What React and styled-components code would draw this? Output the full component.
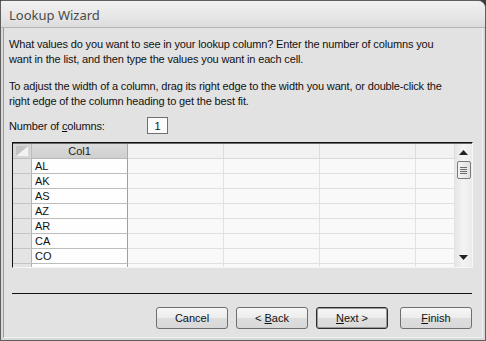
import React from "react";
import styled, { createGlobalStyle } from "styled-components";

const Global = createGlobalStyle`
  html, body { margin: 0; padding: 0; background: #3a3a3a; }
  body { width: 486px; height: 341px; overflow: hidden; }
  * { box-sizing: border-box; }
`;

const Window = styled.div`
  width: 486px;
  height: 341px;
  border: 1px solid #5e5e5e;
  border-top-right-radius: 8px;
  border-top-left-radius: 2px;
  background: #d9d9d9;
  display: flex;
  flex-direction: column;
  overflow: hidden;
  font-family: "Liberation Sans", Arial, sans-serif;
`;

const TitleBar = styled.div`
  height: 27px;
  flex: none;
  display: flex;
  align-items: center;
  padding: 0 0 0 8px;
  background: linear-gradient(#f1f1f1, #e6e6e6 60%, #dcdcdc);
  border-bottom: 1px solid #b4b4b4;
`;

const Title = styled.span`
  font-family: "Noto Sans", "Liberation Sans", sans-serif;
  font-size: 13px;
  color: #4a4a4a;
  margin-top: 1px;
`;

const Body = styled.div`
  flex: 1;
  padding: 0 2px 2px 2px;
  display: flex;
`;

const Panel = styled.div`
  flex: 1;
  background: #e2e2e2;
  border-left: 1px solid #9c9c9c;
  border-right: 1px solid #f2f2f2;
  border-bottom: 1px solid #f2f2f2;
  padding-top: 9px;
  display: flex;
  flex-direction: column;
  color: #111;
  font-size: 11px;
`;

const Para = styled.p`
  margin: 0 0 ${(p) => p.$gap}px 0;
  padding: 0 5px;
  line-height: 15px;
  white-space: nowrap;
  letter-spacing: -0.15px;
`;

const FieldRow = styled.div`
  display: flex;
  align-items: center;
  padding: 0 5px;
  height: 17px;
`;

const Label = styled.span`
  width: 138px;
  letter-spacing: -0.15px;
`;

const NumBox = styled.div`
  width: 21px;
  height: 17px;
  border: 1px solid #6f6f6f;
  background: #fbfbfb;
  display: flex;
  align-items: center;
  justify-content: center;
  font-size: 11px;
`;

const Grid = styled.div`
  margin: 8px 9px 0 8px;
  height: 126px;
  display: flex;
  border-style: solid;
  border-width: 1px;
  border-color: #111 #f6f6f6 #f6f6f6 #111;
  overflow: hidden;
`;

const Sheet = styled.div`
  flex: 1;
  display: grid;
  grid-template-columns: 19px 96px 96px 96px 96px 1fr;
  grid-auto-rows: 15px;
  align-content: start;
  background: #f8f8f8;
  overflow: hidden;
  border-top: 1px solid #6a6a6a;
`;

const Corner = styled.div`
  background: #d6d6d6;
  border-right: 1px solid #bdbdbd;
  border-bottom: 1px solid #bdbdbd;
  position: relative;
  svg { position: absolute; inset: 0; }
`;

const HeadCell = styled.div`
  background: ${(p) =>
    p.$active ? "linear-gradient(#dcdcdc, #cfcfcf)" : "#f2f2f2"};
  border-right: 1px solid ${(p) => (p.$active ? "#a9a9a9" : "#dcdcdc")};
  border-bottom: 1px solid ${(p) => (p.$active ? "#b9b9b9" : "#d9d9d9")};
  color: #222;
  text-align: center;
  line-height: 14px;
  font-size: 11px;
`;

const Selector = styled.div`
  background: #e4e4e4;
  border-right: 1px solid #b3b3b3;
  border-bottom: 1px solid #c4c4c4;
`;

const Cell = styled.div`
  background: ${(p) => (p.$active ? "#fefefe" : "#f9f9f9")};
  border-right: 1px solid ${(p) => (p.$active ? "#9f9f9f" : "#e2e2e2")};
  border-bottom: 1px solid ${(p) => (p.$active ? "#bcbcbc" : "#e0e0e0")};
  padding-left: 3px;
  line-height: 14px;
  font-size: 11px;
  color: #111;
`;

const ScrollBar = styled.div`
  width: 17px;
  flex: none;
  background: linear-gradient(90deg, #e6e6e6, #f3f3f3 50%, #ebebeb);
  border-top: 1px solid #6a6a6a;
  display: flex;
  flex-direction: column;
  align-items: center;
  padding-top: 6px;
`;

const Arrow = styled.svg`
  width: 9px;
  height: 5px;
  flex: none;
`;

const Thumb = styled.div`
  margin-top: 6px;
  width: 14px;
  height: 18px;
  border: 1px solid #7a7a7a;
  border-radius: 2px;
  background: linear-gradient(90deg, #f4f4f4, #e0e0e0);
  display: flex;
  flex-direction: column;
  align-items: center;
  justify-content: center;
  gap: 1px;
`;

const Grip = styled.div`
  width: 7px;
  height: 1px;
  background: #6c6c6c;
`;

const Spacer = styled.div`
  flex: 1;
`;

const Divider = styled.div`
  margin: 25px 10px 0 8px;
  height: 1px;
  background: #111;
`;

const ButtonRow = styled.div`
  display: flex;
  justify-content: flex-end;
  margin: 13px 10px 0 0;
`;

const Button = styled.div`
  width: 72px;
  height: 22px;
  margin-left: ${(p) => p.$gap}px;
  border: 1px solid ${(p) => (p.$default ? "#2c2c2c" : "#6f6f6f")};
  box-shadow: ${(p) => (p.$default ? "inset 0 0 0 1px #9a9a9a" : "none")};
  border-radius: 3px;
  background: linear-gradient(#f6f6f6, #ececec 50%, #dedede 51%, #d8d8d8);
  display: flex;
  align-items: center;
  justify-content: center;
  font-size: 11px;
  color: #111;
  u { text-decoration: underline; }
`;

const rows = ["AL", "AK", "AS", "AZ", "AR", "CA", "CO", ""];

export default function App() {
  return (
    <>
      <Global />
      <Window>
        <TitleBar>
          <Title>Lookup Wizard</Title>
        </TitleBar>
        <Body>
          <Panel>
            <Para $gap={12}>
              What values do you want to see in your lookup column? Enter the number of columns you
              <br />
              want in the list, and then type the values you want in each cell.
            </Para>
            <Para $gap={8}>
              To adjust the width of a column, drag its right edge to the width you want, or double-click the
              <br />
              right edge of the column heading to get the best fit.
            </Para>
            <FieldRow>
              <Label>
                Number of <u>c</u>olumns:
              </Label>
              <NumBox>1</NumBox>
            </FieldRow>
            <Grid>
              <Sheet>
                <Corner>
                  <svg width="18" height="14" viewBox="0 0 18 14">
                    <polygon points="3,12 15,12 15,2" fill="#f2f2f2" />
                    <polygon points="3,12 15,2 3,2" fill="#c4c4c4" />
                  </svg>
                </Corner>
                <HeadCell $active>Col1</HeadCell>
                <HeadCell />
                <HeadCell />
                <HeadCell />
                <HeadCell />
                {rows.map((r, i) => (
                  <React.Fragment key={i}>
                    <Selector />
                    <Cell $active>{r}</Cell>
                    <Cell />
                    <Cell />
                    <Cell />
                    <Cell />
                  </React.Fragment>
                ))}
              </Sheet>
              <ScrollBar>
                <Arrow viewBox="0 0 9 5">
                  <polygon points="0,5 9,5 4.5,0" fill="#222" />
                </Arrow>
                <Thumb>
                  <Grip />
                  <Grip />
                  <Grip />
                  <Grip />
                </Thumb>
                <Spacer />
                <Arrow viewBox="0 0 9 5" style={{ marginBottom: "7px" }}>
                  <polygon points="0,0 9,0 4.5,5" fill="#222" />
                </Arrow>
              </ScrollBar>
            </Grid>
            <Divider />
            <ButtonRow>
              <Button $gap={0}>Cancel</Button>
              <Button $gap={8}>
                &lt;&nbsp;<u>B</u>ack
              </Button>
              <Button $gap={8} $default>
                <u>N</u>ext &gt;
              </Button>
              <Button $gap={12}>
                <u>F</u>inish
              </Button>
            </ButtonRow>
          </Panel>
        </Body>
      </Window>
    </>
  );
}
